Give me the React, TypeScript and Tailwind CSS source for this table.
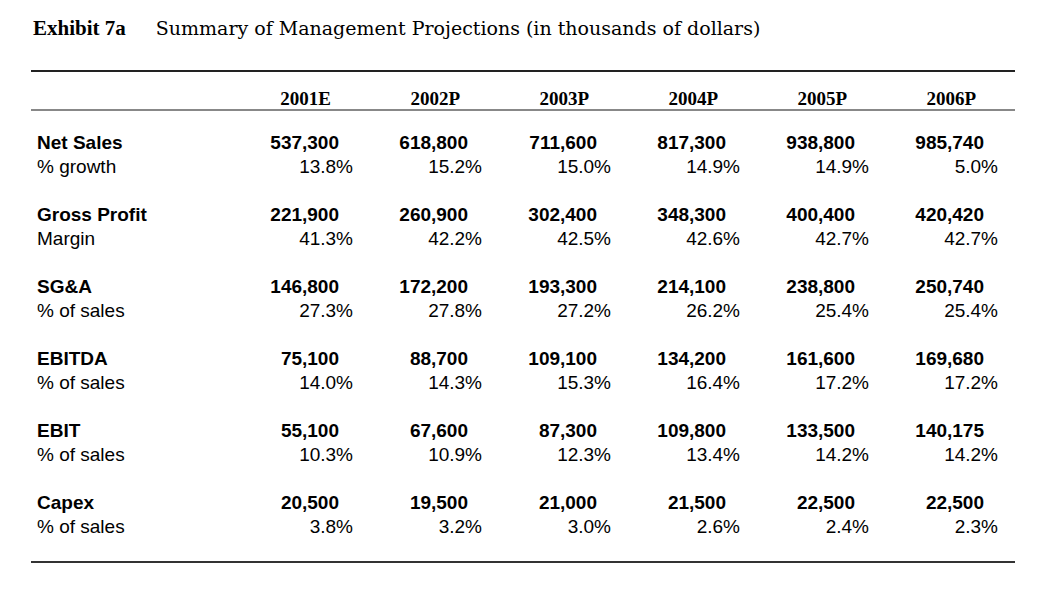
import React from "react";

const years = ["2001E", "2002P", "2003P", "2004P", "2005P", "2006P"];

const groups: { label: string; sub: string; values: string[]; pcts: string[] }[] = [
  {
    label: "Net Sales",
    sub: "% growth",
    values: ["537,300", "618,800", "711,600", "817,300", "938,800", "985,740"],
    pcts: ["13.8%", "15.2%", "15.0%", "14.9%", "14.9%", "5.0%"],
  },
  {
    label: "Gross Profit",
    sub: "Margin",
    values: ["221,900", "260,900", "302,400", "348,300", "400,400", "420,420"],
    pcts: ["41.3%", "42.2%", "42.5%", "42.6%", "42.7%", "42.7%"],
  },
  {
    label: "SG&A",
    sub: "% of sales",
    values: ["146,800", "172,200", "193,300", "214,100", "238,800", "250,740"],
    pcts: ["27.3%", "27.8%", "27.2%", "26.2%", "25.4%", "25.4%"],
  },
  {
    label: "EBITDA",
    sub: "% of sales",
    values: ["75,100", "88,700", "109,100", "134,200", "161,600", "169,680"],
    pcts: ["14.0%", "14.3%", "15.3%", "16.4%", "17.2%", "17.2%"],
  },
  {
    label: "EBIT",
    sub: "% of sales",
    values: ["55,100", "67,600", "87,300", "109,800", "133,500", "140,175"],
    pcts: ["10.3%", "10.9%", "12.3%", "13.4%", "14.2%", "14.2%"],
  },
  {
    label: "Capex",
    sub: "% of sales",
    values: ["20,500", "19,500", "21,000", "21,500", "22,500", "22,500"],
    pcts: ["3.8%", "3.2%", "3.0%", "2.6%", "2.4%", "2.3%"],
  },
];

export default function App() {
  return (
    <div className="w-[1046px] h-[590px] bg-white pt-[13px] pl-[31px] text-black">
      <div className="w-[984px]">
        <h1 className="h-[28px] overflow-visible text-[21px] leading-[28px] pl-[2px] whitespace-nowrap">
          <span className="font-['Liberation_Serif',serif] font-bold">Exhibit 7a</span>
          <span className="ml-[30px] font-['DejaVu_Serif',serif] text-[19px] leading-[20px]">
            Summary of Management Projections (in thousands of dollars)
          </span>
        </h1>

        <div className="mt-[29px] border-t-2 border-[#222]">
          <div className="grid grid-cols-[193px_repeat(6,129px)] pt-[17px] border-b-2 border-[#888] font-['Liberation_Serif',serif] font-bold text-[19px] leading-[20px]">
            <div />
            {years.map((y) => (
              <div key={y} className="text-right pr-[22px]">
                {y}
              </div>
            ))}
          </div>

          <div className="flex flex-col gap-[24px] pt-[20px] pb-[22px] border-b-2 border-[#333] font-['Liberation_Sans',Arial,sans-serif] text-[19px] leading-[24px]">
            {groups.map((g) => (
              <div key={g.label} className="grid grid-cols-[193px_repeat(6,129px)]">
                <div className="pl-[6px] font-bold">{g.label}</div>
                {g.values.map((v, i) => (
                  <div key={i} className="text-right pr-[14px] font-bold">
                    {v}
                  </div>
                ))}
                <div className="pl-[6px]">{g.sub}</div>
                {g.pcts.map((p, i) => (
                  <div key={i} className="text-right">
                    {p}
                  </div>
                ))}
              </div>
            ))}
          </div>
        </div>
      </div>
    </div>
  );
}
